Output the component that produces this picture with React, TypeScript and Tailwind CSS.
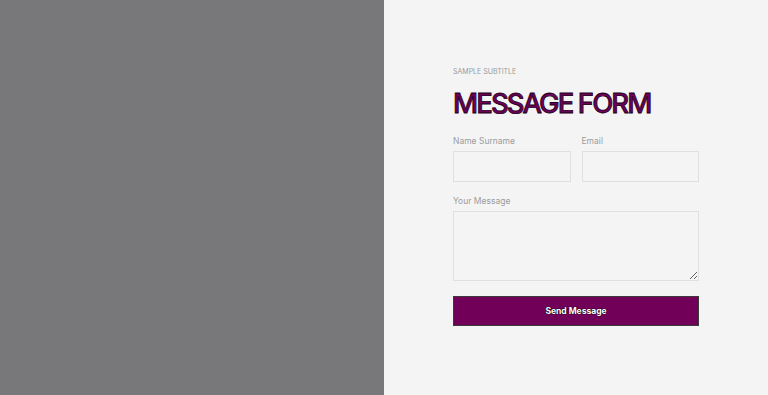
import React from 'react'

export default function App() {
  return (
    <div className="flex h-[395px] w-full" style={{ fontFamily: 'Inter, "Noto Sans", sans-serif' }}>
      {/* Left image placeholder */}
      <div className="w-1/2 bg-[#78787a]" />

      {/* Form side */}
      <div className="flex w-1/2 justify-center bg-[#f4f4f4] pt-[68px]">
        <div className="w-[246px]">
          <p className="text-[7px] uppercase leading-[8px] text-[#9a9a9a]">Sample Subtitle</p>
          <h1
            className="mt-[7px] text-[27.5px] font-medium uppercase leading-[40px] tracking-[-1.9px] text-[#6d0059]"
            style={{ WebkitTextStroke: '0.8px #1a0014' }}
          >
            Message Form
          </h1>

          <form className="mt-[12px]" onSubmit={(e) => e.preventDefault()}>
            <div className="grid grid-cols-2 gap-[11px]">
              <label className="block">
                <span className="block text-[8.5px] leading-[12px] text-[#9c9c9c]">Name Surname</span>
                <input type="text" className="mt-[4px] block h-[31px] w-full border border-[#e0e0e0] bg-[#f4f4f4] outline-none" />
              </label>
              <label className="block">
                <span className="block text-[8.5px] leading-[12px] text-[#9c9c9c]">Email</span>
                <input type="email" className="mt-[4px] block h-[31px] w-full border border-[#e0e0e0] bg-[#f4f4f4] outline-none" />
              </label>
            </div>

            <label className="mt-[13px] block">
              <span className="block text-[8.5px] leading-[12px] text-[#9c9c9c]">Your Message</span>
              <textarea className="mt-[4px] block h-[70px] w-full border border-[#e0e0e0] bg-[#f4f4f4] outline-none" />
            </label>

            <button
              type="submit"
              className="mt-[15px] block h-[30px] w-full border border-[#3a3a3a] bg-[#700058] text-[8.5px] font-bold text-white"
              style={{ textShadow: '0 0 1px #000, 0 0 1px #000' }}
            >
              Send Message
            </button>
          </form>
        </div>
      </div>
    </div>
  )
}
